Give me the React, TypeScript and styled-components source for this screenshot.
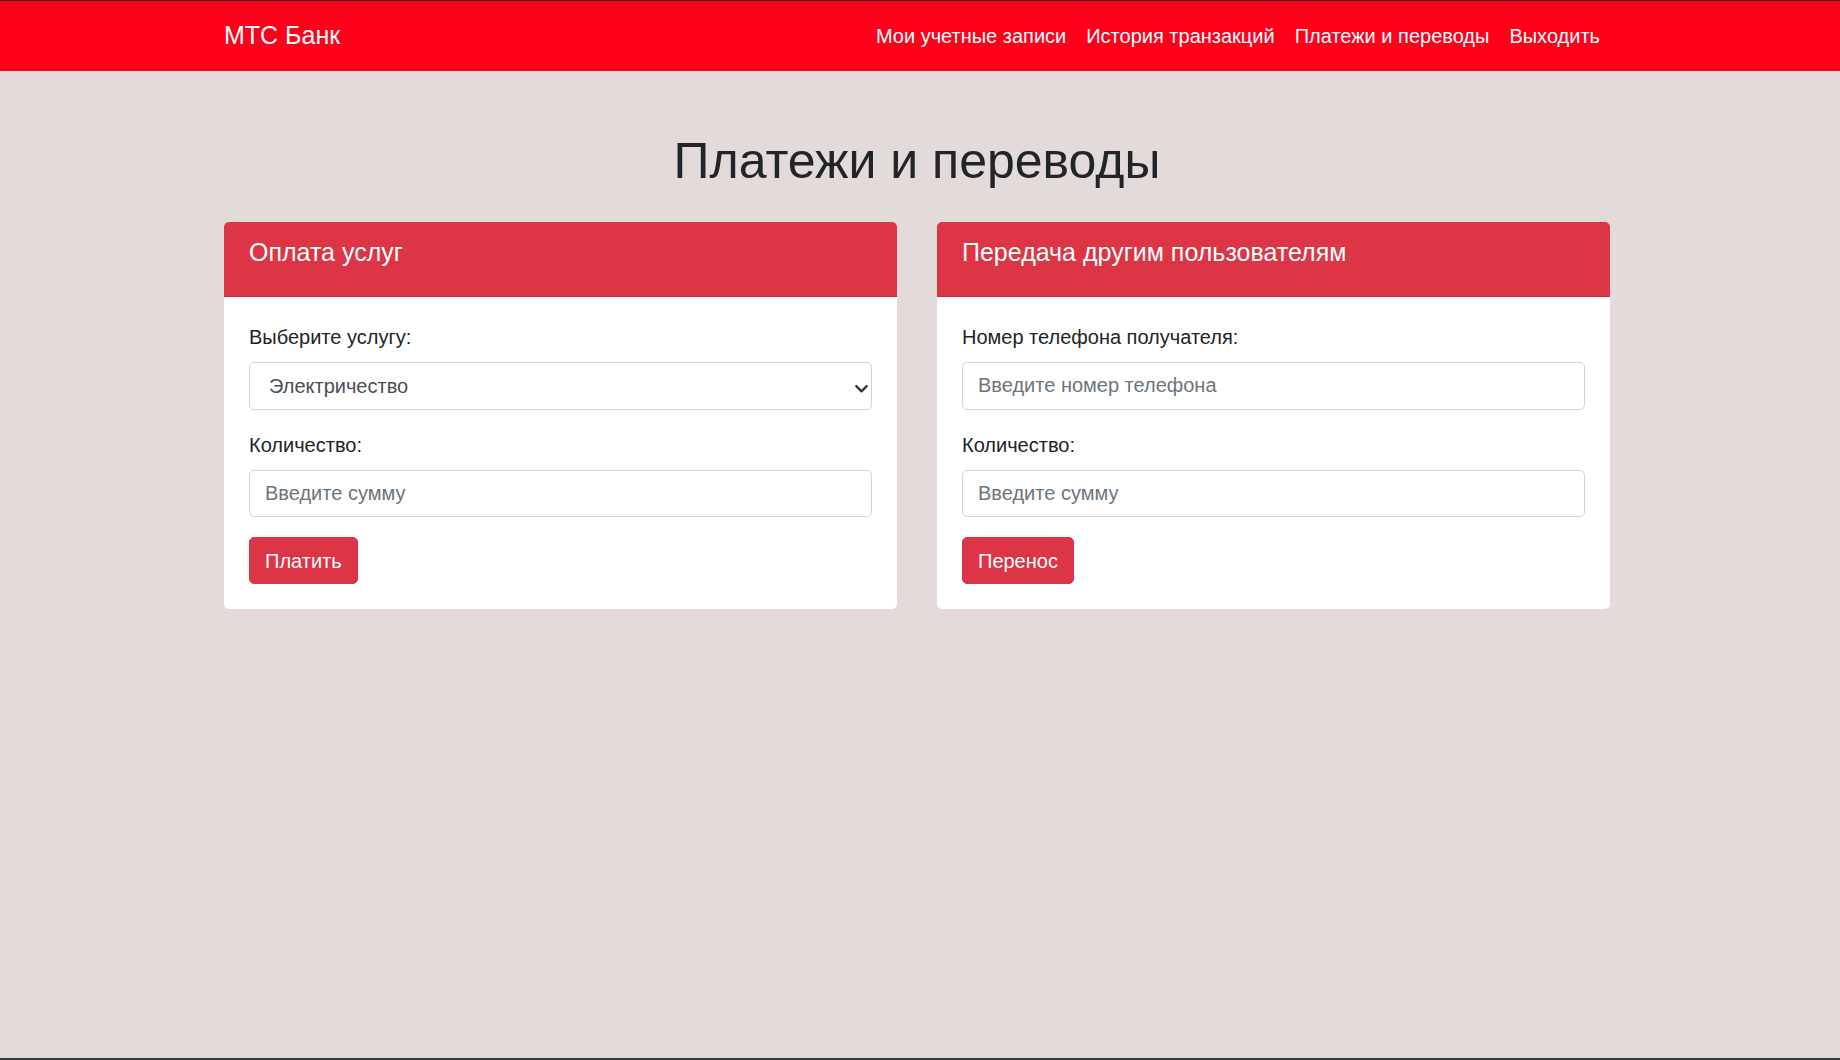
import React from "react";
import styled, { createGlobalStyle } from "styled-components";

const GlobalStyle = createGlobalStyle`
  *, *::before, *::after { box-sizing: border-box; }
  html, body { margin: 0; padding: 0; overflow: hidden; }
  body {
    background: #e3dbda;
    font-family: "Liberation Sans", Arial, sans-serif;
    font-size: 20px;
    line-height: 1.5;
    color: #212529;
  }
`;

const Page = styled.div`
  height: 100vh;
  overflow: hidden;
  border-top: 1px solid #2e2e2e;
  border-bottom: 2px solid #3a3a3a;
  display: flex;
  flex-direction: column;
`;

const Navbar = styled.nav`
  flex: none;
  background: #ff001a;
  height: 70px;
  display: flex;
  align-items: center;
`;

const Container = styled.div`
  width: 1386px;
  margin-left: 224px;
`;

const NavInner = styled(Container)`
  display: flex;
  align-items: center;
  justify-content: space-between;
`;

const Brand = styled.a`
  color: #fff;
  font-size: 25px;
  line-height: 1.5;
  text-decoration: none;
  white-space: nowrap;
`;

const NavList = styled.ul`
  display: flex;
  list-style: none;
  margin: 0;
  padding: 0;
`;

const NavLink = styled.a`
  display: block;
  color: #fff;
  font-size: 20px;
  line-height: 1.5;
  padding: 0 10px;
  text-decoration: none;
  white-space: nowrap;
`;

const Main = styled(Container)`
  padding-top: 60px;
`;

const Title = styled.h1`
  margin: 0 0 31px;
  font-size: 50px;
  line-height: 1.2;
  font-weight: 500;
  text-align: center;
  color: #212529;
`;

const CardRow = styled.div`
  display: flex;
  gap: 40px;
  align-items: flex-start;
`;

const Card = styled.section`
  flex: 1;
  background: #fff;
  border-radius: 5px;
  overflow: hidden;
`;

const CardHeader = styled.div`
  background: #dc3545;
  padding: 15px 25px 19px;
  border-bottom: 1px solid rgba(0, 0, 0, 0.125);
`;

const CardTitle = styled.h5`
  margin: 0 0 10px;
  font-size: 25px;
  line-height: 1.2;
  font-weight: 500;
  color: #fff;
`;

const CardBody = styled.div`
  padding: 25px;
`;

const FormGroup = styled.div`
  margin-bottom: 20px;
`;

const Label = styled.label`
  display: block;
  margin-bottom: 10px;
  font-size: 20px;
  line-height: 1.5;
  color: #212529;
`;

const TextInput = styled.input`
  display: block;
  width: 100%;
  height: 47.5px;
  padding: 7.5px 15px;
  font-family: inherit;
  font-size: 20px;
  line-height: 1.5;
  color: #495057;
  background: #fff;
  border: 1px solid #ced4da;
  border-radius: 5px;
  outline: none;
  &::placeholder { color: #6c757d; opacity: 1; }
`;

const SelectWrap = styled.div`
  position: relative;
`;

const Select = styled.select`
  display: block;
  width: 100%;
  height: 47.5px;
  padding: 7.5px 40px 7.5px 19px;
  font-family: inherit;
  font-size: 20px;
  line-height: 1.5;
  color: #495057;
  background: #fff;
  border: 1px solid #ced4da;
  border-radius: 5px;
  appearance: none;
  -webkit-appearance: none;
  outline: none;
`;

const Chevron = styled.svg`
  position: absolute;
  right: 3px;
  top: 19px;
  width: 15px;
  height: 15px;
  pointer-events: none;
`;

const Button = styled.button`
  display: inline-block;
  font-family: inherit;
  font-size: 20px;
  line-height: 1.5;
  padding: 7.5px 15px;
  color: #fff;
  background: #dc3545;
  border: 1px solid #dc3545;
  border-radius: 5px;
  cursor: pointer;
`;

const ChevronIcon = () => (
  <Chevron viewBox="0 0 16 16" fill="none">
    <path d="M2.5 5.5l5.5 5.5 5.5-5.5" stroke="#343a40" strokeWidth="2.6" strokeLinecap="round" strokeLinejoin="round" />
  </Chevron>
);

export default function App() {
  return (
    <>
      <GlobalStyle />
      <Page>
        <Navbar>
          <NavInner>
            <Brand href="#">МТС Банк</Brand>
            <NavList>
              <li><NavLink href="#">Мои учетные записи</NavLink></li>
              <li><NavLink href="#">История транзакций</NavLink></li>
              <li><NavLink href="#">Платежи и переводы</NavLink></li>
              <li><NavLink href="#">Выходить</NavLink></li>
            </NavList>
          </NavInner>
        </Navbar>
        <Main>
          <Title>Платежи и переводы</Title>
          <CardRow>
            <Card>
              <CardHeader>
                <CardTitle>Оплата услуг</CardTitle>
              </CardHeader>
              <CardBody>
                <FormGroup>
                  <Label htmlFor="service">Выберите услугу:</Label>
                  <SelectWrap>
                    <Select id="service" defaultValue="electricity">
                      <option value="electricity">Электричество</option>
                      <option value="water">Вода</option>
                      <option value="gas">Газ</option>
                    </Select>
                    <ChevronIcon />
                  </SelectWrap>
                </FormGroup>
                <FormGroup>
                  <Label htmlFor="amount1">Количество:</Label>
                  <TextInput id="amount1" type="text" placeholder="Введите сумму" />
                </FormGroup>
                <Button type="button">Платить</Button>
              </CardBody>
            </Card>
            <Card>
              <CardHeader>
                <CardTitle>Передача другим пользователям</CardTitle>
              </CardHeader>
              <CardBody>
                <FormGroup>
                  <Label htmlFor="phone">Номер телефона получателя:</Label>
                  <TextInput id="phone" type="text" placeholder="Введите номер телефона" />
                </FormGroup>
                <FormGroup>
                  <Label htmlFor="amount2">Количество:</Label>
                  <TextInput id="amount2" type="text" placeholder="Введите сумму" />
                </FormGroup>
                <Button type="button">Перенос</Button>
              </CardBody>
            </Card>
          </CardRow>
        </Main>
      </Page>
    </>
  );
}
